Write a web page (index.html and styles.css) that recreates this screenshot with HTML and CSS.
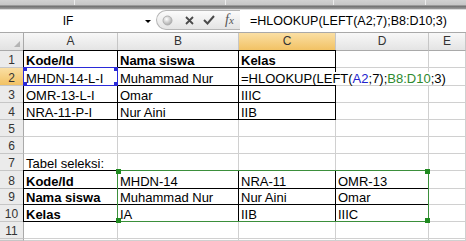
FILE: index.html
```html
<!DOCTYPE html>
<html lang="id">
<head>
    <meta charset="UTF-8">
    <title>HLOOKUP dengan LEFT</title>
    <link rel="stylesheet" href="styles.css">
</head>
<body>
    <!-- bottom edge of the ribbon -->
    <div class="ribbon-edge">
        <span style="width: 75px"></span>
        <span style="width: 151px"></span>
        <span style="width: 108px"></span>
        <span style="width: 92px"></span>
    </div>

    <!-- Formula bar -->
    <div class="formula-bar">
        <div class="name-box">
            <span class="name">IF</span>
            <span class="drop"></span>
        </div>
        <div class="fx-tools">
            <svg class="grip" width="11" height="11" viewBox="0 0 11 11">
                <defs>
                    <radialGradient id="ball" cx="0.4" cy="0.35" r="0.7">
                        <stop offset="0" stop-color="#ffffff"/>
                        <stop offset="1" stop-color="#a4a4a4"/>
                    </radialGradient>
                </defs>
                <circle cx="5.5" cy="5.5" r="4.5" fill="url(#ball)" stroke="#b0b0b0" stroke-width="1"/>
            </svg>
            <svg class="cancel" width="9" height="9" viewBox="0 0 9 9">
                <path d="M1 1 L8 8 M8 1 L1 8" stroke="#4a4a4a" stroke-width="1.8" fill="none"/>
            </svg>
            <svg class="enter" width="12" height="10" viewBox="0 0 12 10">
                <path d="M1 5 L4.5 8.5 L11 1" stroke="#4a4a4a" stroke-width="2" fill="none"/>
            </svg>
            <span class="fx">f<span class="x">x</span></span>
        </div>
        <div class="formula-input">=HLOOKUP(LEFT(A2;7);B8:D10;3)</div>
    </div>

    <!-- Worksheet -->
    <div class="sheet">
        <div class="c corner"></div>
        <div class="c col-head">A</div>
        <div class="c col-head">B</div>
        <div class="c col-head active">C</div>
        <div class="c col-head">D</div>
        <div class="c col-head">E</div>

        <div class="c row-head">1</div>
        <div class="c t top left bold">Kode/Id</div>
        <div class="c t top bold">Nama siswa</div>
        <div class="c t top bold">Kelas</div>
        <div class="c"></div>
        <div class="c"></div>

        <div class="c row-head active">2</div>
        <div class="c t left">MHDN-14-L-I</div>
        <div class="c t">Muhammad Nur</div>
        <div class="c t"><span class="edit">=HLOOKUP(LEFT(<span class="ref-a">A2</span>;7);<span class="ref-b">B8:D10</span>;3)</span></div>
        <div class="c"></div>
        <div class="c"></div>

        <div class="c row-head">3</div>
        <div class="c t left">OMR-13-L-I</div>
        <div class="c t">Omar</div>
        <div class="c t">IIIC</div>
        <div class="c"></div>
        <div class="c"></div>

        <div class="c row-head">4</div>
        <div class="c t left">NRA-11-P-I</div>
        <div class="c t">Nur Aini</div>
        <div class="c t">IIB</div>
        <div class="c"></div>
        <div class="c"></div>

        <div class="c row-head">5</div>
        <div class="c"></div>
        <div class="c"></div>
        <div class="c"></div>
        <div class="c"></div>
        <div class="c"></div>

        <div class="c row-head">6</div>
        <div class="c"></div>
        <div class="c"></div>
        <div class="c"></div>
        <div class="c"></div>
        <div class="c"></div>

        <div class="c row-head">7</div>
        <div class="c">Tabel seleksi:</div>
        <div class="c"></div>
        <div class="c"></div>
        <div class="c"></div>
        <div class="c"></div>

        <div class="c row-head">8</div>
        <div class="c t top left bold">Kode/Id</div>
        <div class="c t top">MHDN-14</div>
        <div class="c t top">NRA-11</div>
        <div class="c t top">OMR-13</div>
        <div class="c"></div>

        <div class="c row-head">9</div>
        <div class="c t left bold">Nama siswa</div>
        <div class="c t">Muhammad Nur</div>
        <div class="c t">Nur Aini</div>
        <div class="c t">Omar</div>
        <div class="c"></div>

        <div class="c row-head">10</div>
        <div class="c t left bold">Kelas</div>
        <div class="c t">IA</div>
        <div class="c t">IIB</div>
        <div class="c t">IIIC</div>
        <div class="c"></div>

        <div class="c row-head">11</div>
        <div class="c"></div>
        <div class="c"></div>
        <div class="c"></div>
        <div class="c"></div>
        <div class="c"></div>

        <div class="c row-head"></div>
        <div class="c"></div>
        <div class="c"></div>
        <div class="c"></div>
        <div class="c"></div>
        <div class="c"></div>

        <!-- range highlights while editing C2 -->
        <div class="range range-a">
            <i class="h tl"></i><i class="h tr"></i><i class="h bl"></i><i class="h br"></i>
        </div>
        <div class="range range-b">
            <i class="h tl"></i><i class="h tr"></i><i class="h bl"></i><i class="h br"></i>
        </div>
    </div>
</body>
</html>
```

FILE: styles.css
```css
/* Page */
body {
    margin: 0;
    width: 466px;
    height: 241px;
    overflow: hidden;
    background: #fff;
    font-family: "Liberation Sans", Arial, sans-serif;
    color: #000;
}

/* Ribbon edge */
.ribbon-edge {
    display: flex;
    height: 10px;
    background: linear-gradient(#d2d2d2 0, #c6c6c6 5px, #6e6e6e 6px, #9c9c9c 9px, #dcdcdc 9px);
}

.ribbon-edge span {
    height: 5px;
    box-sizing: border-box;
    border-right: 1px solid #ececec;
}

/* Formula bar */
.formula-bar {
    display: flex;
    height: 22px;
    border-bottom: 1px solid #a9a9a9;
    background: #fff;
}

.name-box {
    display: flex;
    align-items: center;
    width: 156px;
    font-size: 12px;
}

.name-box .name {
    width: 136px;
    text-align: center;
}

.drop {
    margin-left: 9px;
    width: 0;
    height: 0;
    border-left: 3px solid transparent;
    border-right: 3px solid transparent;
    border-top: 3px solid #000;
}

.fx-tools {
    display: flex;
    align-items: center;
    width: 84px;
    height: 20px;
    box-sizing: border-box;
    border: 1px solid #b6b6b6;
    border-right: 0;
    border-radius: 10px 0 0 10px;
    background: linear-gradient(#fbfbfb, #e4e4e4);
}

.grip {
    margin-left: 5px;
}

.cancel {
    margin-left: 12px;
}

.enter {
    margin-left: 9px;
}

.fx {
    margin-left: 10px;
    font-family: "Liberation Serif", serif;
    font-style: italic;
    font-size: 14px;
    color: #555;
}

.fx .x {
    font-size: 11px;
}

.formula-input {
    flex: 1;
    padding: 1px 0 0 10px;
    font-size: 12.5px;
    line-height: 21px;
    white-space: nowrap;
}

/* Worksheet grid */
.sheet {
    position: relative;
    display: grid;
    grid-template-columns: 24px 94px 121px 97px 93px 1fr;
    grid-template-rows: 18px 17px 18px 17px 17px 17px 17px 17px 18px 16px 17px 17px 2px;
    font-size: 13px;
}

.c {
    box-sizing: border-box;
    display: flex;
    align-items: flex-end;
    padding-left: 2px;
    line-height: 13px;
    white-space: nowrap;
    border-right: 1px solid #d0d0d0;
    border-bottom: 1px solid #d0d0d0;
}

.bold {
    font-weight: bold;
}

/* Headers */
.corner {
    justify-content: flex-end;
    padding: 0 3px 3px 0;
    background: linear-gradient(#f4f4f4, #e2e2e2);
    border-right-color: #a9a9a9;
    border-bottom-color: #a9a9a9;
}

.corner::after {
    content: "";
    width: 0;
    height: 0;
    border-left: 6px solid transparent;
    border-bottom: 6px solid #b4b4b4;
}

.col-head {
    justify-content: center;
    align-items: center;
    padding: 0;
    font-size: 12px;
    color: #333;
    background: linear-gradient(#f8f8f8, #e4e4e4);
    border-right-color: #c6c6c6;
    border-bottom-color: #a9a9a9;
}

.row-head {
    justify-content: center;
    padding: 0;
    font-size: 12px;
    color: #333;
    background: #ebebeb;
    border-right-color: #a9a9a9;
    border-bottom-color: #c6c6c6;
}

.col-head.active,
.row-head.active {
    background: linear-gradient(#fadfa4, #f2c264);
}

/* Black cell borders */
.t {
    border-right-color: #000;
    border-bottom-color: #000;
}

.t.top {
    box-shadow: 0 -1px 0 #000;
}

.t.left {
    box-shadow: -1px 0 0 #000;
}

.t.top.left {
    box-shadow: -1px -1px 0 #000, 0 -1px 0 #000, -1px 0 0 #000;
}

/* Formula being typed in C2 */
.edit {
    position: relative;
    z-index: 2;
    background: #fff;
}

.ref-a {
    color: #2222cc;
}

.ref-b {
    color: #2e8a2e;
}

/* Range highlights */
.range {
    position: absolute;
    z-index: 3;
    top: -1px;
    left: -1px;
    right: 0;
    bottom: 0;
}

.range-a {
    grid-row: 3 / 4;
    grid-column: 2 / 3;
    border: 1px solid #2a2ad8;
}

.range-b {
    grid-row: 9 / 12;
    grid-column: 3 / 6;
    border: 1px solid #3b8f3b;
}

.h {
    position: absolute;
    width: 4px;
    height: 4px;
}

.range-a .h {
    background: #2a2ad8;
}

.range-b .h {
    width: 5px;
    height: 5px;
    background: #1f8a1f;
}

.range-a .tl { top: -1px; left: -1px; }
.range-a .tr { top: -1px; right: -1px; }
.range-a .bl { bottom: -1px; left: -1px; }
.range-a .br { bottom: -1px; right: -1px; }

.range-b .tl { top: -2px; left: -2px; }
.range-b .tr { top: -2px; right: -2px; }
.range-b .bl { bottom: -2px; left: -2px; }
.range-b .br { bottom: -2px; right: -2px; }
```
